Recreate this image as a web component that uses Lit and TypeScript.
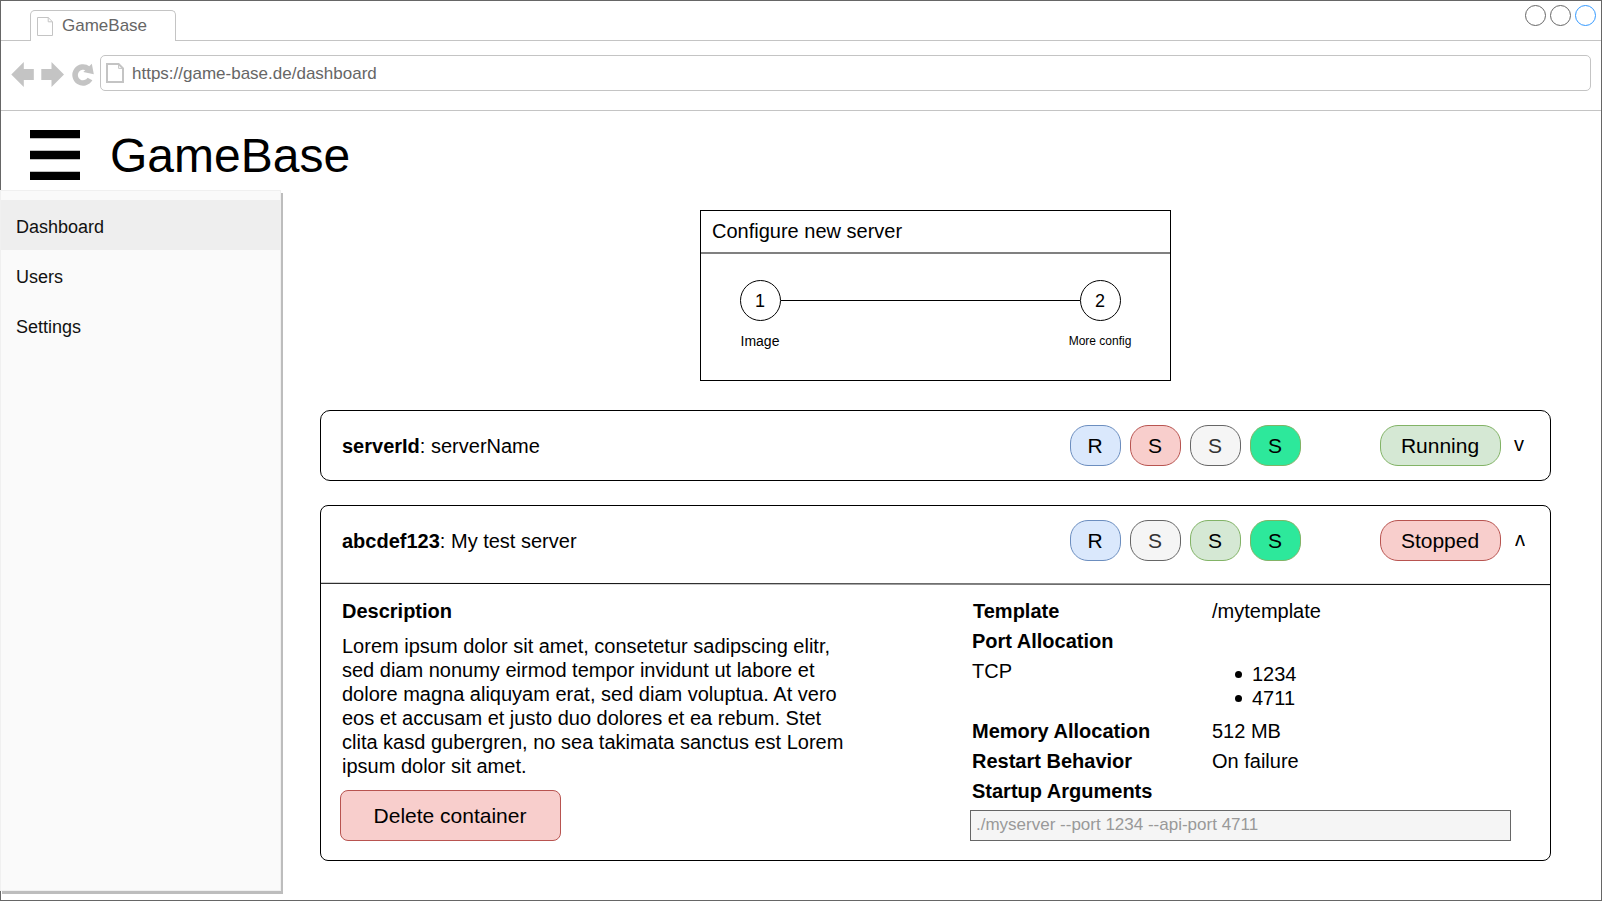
import { LitElement, html, css, svg } from "lit";
import { customElement, property } from "lit/decorators.js";

type Tone = "blue" | "red" | "gray" | "green" | "mint";

@customElement("gb-pill")
class GbPill extends LitElement {
  @property() label = "";
  @property() tone: Tone = "blue";
  static styles = css`
    :host { display: block; }
    .pill {
      box-sizing: border-box; height: 41px; border: 1px solid; border-radius: 18px;
      display: flex; align-items: center; justify-content: center; padding-right: 1px;
      font-size: 21px; line-height: 24px; color: #000;
    }
    .blue { background: #dae8fc; border-color: #6c8ebf; }
    .red { background: #f8cecc; border-color: #b85450; }
    .gray { background: #f5f5f5; border-color: #666; color: #333; }
    .green { background: #d5e8d4; border-color: #82b366; }
    .mint { background: #2de89b; border-color: #82b366; }
  `;
  render() {
    return html`<div class="pill ${this.tone}">${this.label}</div>`;
  }
}

@customElement("gb-server-head")
class GbServerHead extends LitElement {
  @property() sid = "";
  @property() name = "";
  @property() status = "";
  @property({ attribute: false }) tones: Tone[] = [];
  @property({ type: Boolean }) open = false;
  static styles = css`
    :host { display: block; }
    .head { display: flex; padding: 14px 24px 0 21px; height: 41px; }
    .title { flex: 1; padding-top: 9px; font-size: 20px; line-height: 24px; }
    .actions { display: flex; gap: 9px; margin-right: 79px; }
    .action { width: 51px; }
    .status { width: 121px; }
    .caret { width: 14px; margin-left: 11px; font-size: 20px; line-height: 24px; text-align: center; height: 24px; margin-top: 7px; }
    .up { transform: rotate(180deg); margin-top: 10px; margin-left: 12px; margin-right: -1px; }
  `;
  render() {
    return html`<div class="head">
      <div class="title"><b>${this.sid}</b>: ${this.name}</div>
      <div class="actions">
        ${this.tones.map((t, i) => html`<gb-pill class="action" .tone=${t} .label=${i ? "S" : "R"}></gb-pill>`)}
      </div>
      <gb-pill class="status" .tone=${this.open ? "red" : "green"} .label=${this.status}></gb-pill>
      <div class="caret ${this.open ? "up" : ""}">v</div>
    </div>`;
  }
}

@customElement("app-root")
class AppRoot extends LitElement {
  static styles = css`
    :host {
      display: block; box-sizing: border-box; width: 1602px; height: 901px; overflow: hidden;
      font-family: "Liberation Sans", Arial, sans-serif; color: #000; background: #fff;
    }
    .window { box-sizing: border-box; width: 1602px; height: 901px; border: 1px solid #666; display: flex; flex-direction: column; }
    svg { display: block; }
    .tabs { display: flex; height: 40px; color: #666; font-size: 17px; }
    .rule { border-bottom: 1px solid #c4c4c4; box-sizing: border-box; }
    .lead { width: 29px; }
    .tab {
      box-sizing: border-box; width: 146px; margin-top: 9px; height: 31px; border: 1px solid #c4c4c4;
      border-bottom: 0; border-radius: 5px 5px 0 0; display: flex; padding: 6px 0 0 6px; gap: 9px;
    }
    .tab span { line-height: 20px; margin-top: -1px; }
    .rest { flex: 1; display: flex; justify-content: flex-end; padding: 4px 5px 0 0; gap: 4px; }
    .dot { box-sizing: border-box; width: 21px; height: 21px; border: 1px solid #666; border-radius: 50%; }
    .active { border-color: #3399ff; }
    .bar { display: flex; height: 70px; padding: 14px 10px 0 9px; }
    .nav { width: 90px; }
    .address {
      flex: 1; box-sizing: border-box; height: 36px; border: 1px solid #c4c4c4; border-radius: 5px;
      display: flex; padding: 7px 0 0 5px; gap: 8px; color: #666; font-size: 17px; line-height: 20px;
    }
    .address span { padding-top: 1px; }
    .top { display: flex; height: 79px; padding-left: 29px; gap: 30px; box-sizing: border-box; }
    .menu { padding-top: 19px; }
    .brand { font-size: 48px; line-height: 56px; padding-top: 17px; }
    .body { display: flex; flex: 1; min-height: 0; }
    .side {
      box-sizing: border-box; width: 281px; height: 701px; margin-left: -1px; border: 1px solid #f0f0f0;
      background: #fafafa; box-shadow: 2px 3px 0 #bdbdbd; padding-top: 9px; font-size: 18px;
    }
    .item { height: 50px; line-height: 20px; padding: 17px 0 0 15px; box-sizing: border-box; color: #111; }
    .on { background: #eee; }
    .main { margin-left: 39px; width: 1231px; padding-top: 20px; display: flex; flex-direction: column; }
    .wizard { box-sizing: border-box; width: 471px; height: 171px; border: 1px solid #000; align-self: flex-start; margin-left: 380px; }
    .wtitle { height: 41px; border-bottom: 2px solid #808080; font-size: 20px; line-height: 24px; }
    .wtitle div { padding: 8px 0 0 11px; }
    .steps { display: flex; align-items: flex-start; padding: 26px 28px 0 18px; }
    .step { width: 83px; display: flex; flex-direction: column; align-items: center; }
    .num { box-sizing: border-box; width: 41px; height: 41px; border: 1px solid #000; border-radius: 50%; font-size: 18px; line-height: 40px; text-align: center; padding-right: 1px; }
    .cap { margin-top: 12px; font-size: 14px; line-height: 16px; padding-right: 1px; }
    .small { font-size: 12px; }
    .line { flex: 1; border-top: 1px solid #000; margin: 20px -21px 0; }
    .card { box-sizing: border-box; border: 1px solid #000; border-radius: 10px; height: 71px; margin-top: 29px; }
    .big { height: 356px; border-radius: 8px; margin-top: 24px; }
    .divider { margin-top: 21px; }
    .cols { display: flex; font-size: 20px; line-height: 24px; margin-top: -6px; }
    .desc { width: 510px; padding-left: 21px; padding-top: 19px; }
    .para { padding-top: 11px; }
    .delete {
      box-sizing: border-box; width: 221px; height: 51px; border: 1px solid #b85450; border-radius: 8px; background: #f8cecc;
      margin: 12px 0 0 -2px; font-size: 21px; line-height: 49px; text-align: center; padding-right: 1px;
    }
    .info { margin-left: 118px; width: 541px; padding-top: 16px; }
    .row { display: flex; height: 30px; line-height: 30px; padding-left: 2px; }
    .key { width: 240px; font-weight: bold; }
    .first { box-sizing: border-box; padding-left: 1px; }
    .plain { font-weight: normal; }
    .tall { height: 60px; }
    .ports { margin: 6px 0 0; padding: 0; list-style: none; line-height: 24px; }
    .ports li { display: flex; align-items: center; gap: 10px; padding-left: 23px; }
    .ports li::before { content: ""; width: 7px; height: 7px; border-radius: 50%; background: #000; }
    .args { box-sizing: border-box; height: 31px; border: 1px solid #666; background: #f5f5f5; color: #999; font-size: 17px; line-height: 20px; padding: 4px 0 0 5px; margin-top: 4px; }
  `;

  private page(w: number, h: number, sw: number) {
    const f = w * 0.3, o = sw / 2;
    return html`<svg width=${w} height=${h} fill="none" stroke="#c4c4c4" stroke-width=${sw}>
      ${svg`<path d="M${o} ${o}H${w - f}L${w - o} ${f}V${h - o}H${o}Z"/><path d="M${w - f} ${o}V${f}H${w - o}" stroke-width="1"/>`}
    </svg>`;
  }

  render() {
    return html`<div class="window">
      <div class="tabs">
        <div class="lead rule"></div>
        <div class="tab">${this.page(16, 19, 1)}<span>GameBase</span></div>
        <div class="rest rule"><i class="dot"></i><i class="dot"></i><i class="dot active"></i></div>
      </div>
      <div class="bar rule">
        <svg class="nav" width="90" height="36" viewBox="10 55 90 36" fill="#c4c4c4">
          <path d="M11.300 74.500L23.800 62V69H33.800V80H23.800V87Z"/>
          <path d="M64 74.500L51.500 62V69H41.300V80H51.500V87Z"/>
          <path d="M88 68.700A8 8 0 1 0 90 79" fill="none" stroke="#c4c4c4" stroke-width="5.500"/>
          <path d="M91.800 63.800L93.800 74.200L83.300 72Z"/>
        </svg>
        <div class="address">${this.page(18, 20, 2)}<span>https://game-base.de/dashboard</span></div>
      </div>
      <div class="top">
        <div class="menu"><svg width="50" height="51"><path d="M0 0H50V8.330H0ZM0 20.830H50V29.170H0ZM0 41.670H50V50H0Z"/></svg></div>
        <div class="brand">GameBase</div>
      </div>
      <div class="body">
        <div class="side">
          <div class="item on">Dashboard</div>
          <div class="item">Users</div>
          <div class="item">Settings</div>
        </div>
        <div class="main">
          <div class="wizard">
            <div class="wtitle"><div>Configure new server</div></div>
            <div class="steps">
              <div class="step"><div class="num">1</div><div class="cap">Image</div></div>
              <div class="line"></div>
              <div class="step"><div class="num">2</div><div class="cap small">More config</div></div>
            </div>
          </div>
          <div class="card">
            <gb-server-head sid="serverId" name="serverName" status="Running" .tones=${["blue", "red", "gray", "mint"]}></gb-server-head>
          </div>
          <div class="card big">
            <gb-server-head open sid="abcdef123" name="My test server" status="Stopped" .tones=${["blue", "gray", "green", "mint"]}></gb-server-head>
            <svg class="divider" width="1229" height="4"><path d="M0 1.300L1229 2.600" stroke="#000"/></svg>
            <div class="cols">
              <div class="desc">
                <b>Description</b>
                <div class="para">Lorem ipsum dolor sit amet, consetetur sadipscing elitr, sed diam nonumy eirmod tempor invidunt ut labore et dolore magna aliquyam erat, sed diam voluptua. At vero eos et accusam et justo duo dolores et ea rebum. Stet clita kasd gubergren, no sea takimata sanctus est Lorem ipsum dolor sit amet.</div>
                <div class="delete">Delete container</div>
              </div>
              <div class="info">
                <div class="row"><span class="key first">Template</span><span>/mytemplate</span></div>
                <div class="row"><span class="key">Port Allocation</span></div>
                <div class="row tall"><span class="key plain">TCP</span><ul class="ports"><li>1234</li><li>4711</li></ul></div>
                <div class="row"><span class="key">Memory Allocation</span><span>512 MB</span></div>
                <div class="row"><span class="key">Restart Behavior</span><span>On failure</span></div>
                <div class="row"><span class="key">Startup Arguments</span></div>
                <div class="args">./myserver --port 1234 --api-port 4711</div>
              </div>
            </div>
          </div>
        </div>
      </div>
    </div>`;
  }
}
